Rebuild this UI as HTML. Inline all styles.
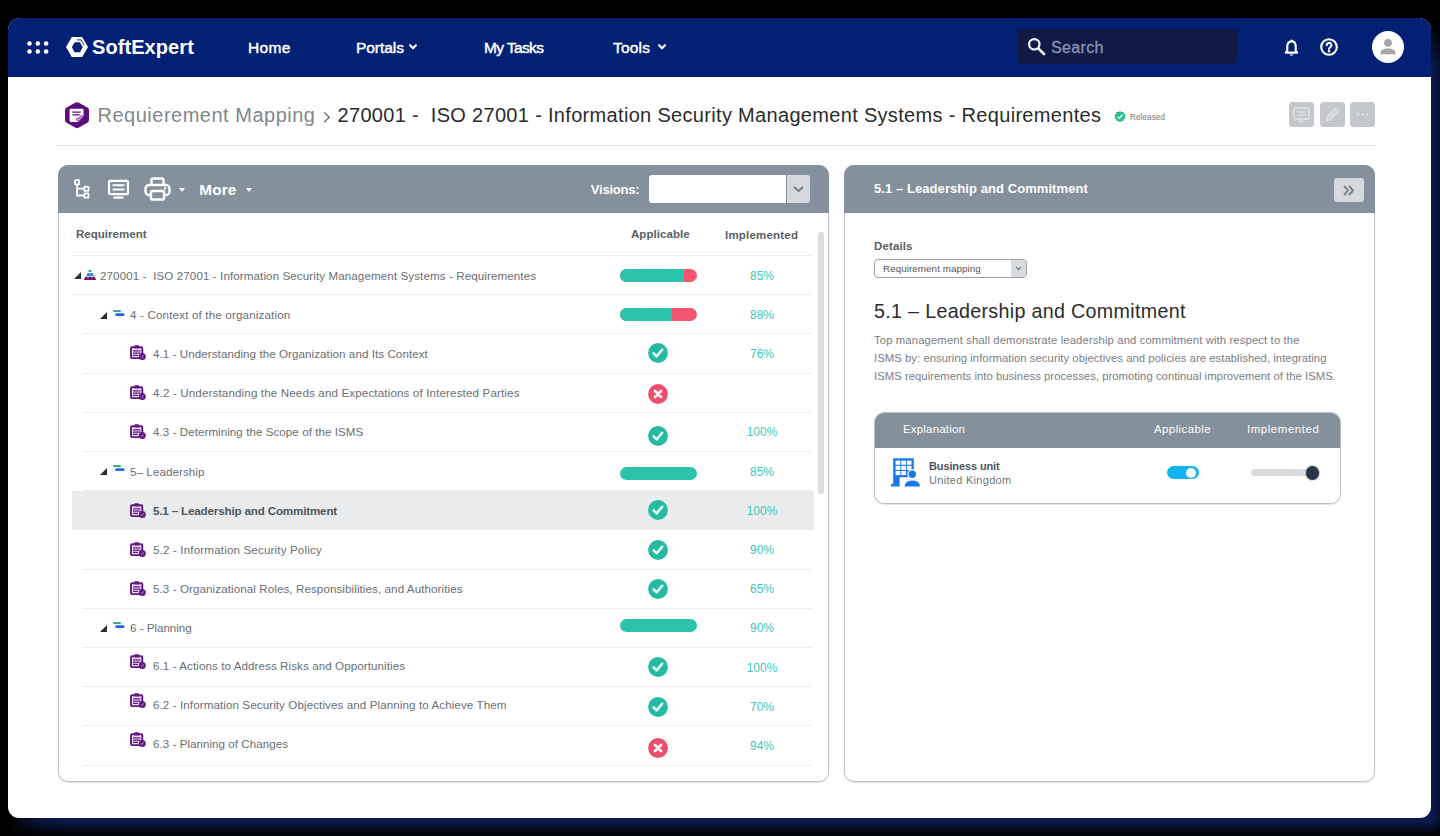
<!DOCTYPE html>
<html lang="en"><head><meta charset="utf-8"><title>Requierement Mapping</title>
<style>
*{box-sizing:border-box;margin:0;padding:0}
html,body{width:1440px;height:836px;overflow:hidden;background:#000}
body{font-family:"Liberation Sans",sans-serif;color:#555;position:relative}
#glow{position:absolute;left:0;top:0;width:1440px;height:836px;background:
 linear-gradient(to bottom,#000 0,#000 17px,rgba(0,0,0,.85) 30px,rgba(0,0,0,0) 64px),
 linear-gradient(to right,#000 0,#000 9px,rgba(0,0,0,.6) 22px,rgba(0,0,0,.2) 40px,rgba(0,0,0,0) 70px),
 linear-gradient(to bottom,rgba(0,0,0,0) 821px,rgba(0,0,0,.55) 828px,rgba(0,0,0,.95) 836px),
 linear-gradient(to right,rgba(0,0,0,0) 1431px,rgba(0,0,0,.4) 1440px),
 #0b1a4e}
#win{position:absolute;left:8px;top:18px;width:1423px;height:800px;background:#fff;border-radius:12px 12px 11px 11px;overflow:hidden}
#nav{position:absolute;left:0;top:0;width:100%;height:58.5px;background:#022175}
.abs{position:absolute;white-space:nowrap}
.nv{position:absolute;top:11px;height:36px;line-height:36px;color:#fff;font-size:15.5px;white-space:nowrap;-webkit-text-stroke:.45px #fff}
svg{position:absolute;overflow:visible}
/* everything below is in page coords via #pg */
#pg{position:absolute;left:0;top:0;width:1440px;height:836px}
.panel{position:absolute;top:165px;height:617px;border:1px solid #c0c3c6;border-radius:10px;background:#fff;box-shadow:0 1px 1px rgba(0,0,0,.12)}
.ph{position:absolute;left:-1px;top:-1px;right:-1px;height:47.8px;background:#84909c;border-radius:10px 10px 0 0}
.row{position:absolute;left:85px;width:727px;height:39.2px;font-size:11.6px;color:#6a6e74}
.row:after{content:"";position:absolute;left:-2px;right:0;bottom:-.5px;height:1px;background:#ededed}
.row.r0:after{left:-13px}
.row.sel:after{display:none}
.row.sel{left:72px;width:742px;background:#e9ebed;font-weight:bold;color:#50555b}
.row .t{position:absolute;top:0;line-height:40px;white-space:pre}
.row.sel .t,.row.sel svg,.row.sel .pct{margin-left:13px}
.bar{position:absolute;left:535.3px;width:77px;height:12.6px;border-radius:7px;background:#f5566f;overflow:hidden}
.bar b{display:block;height:100%;background:#2bc3ab}
.st{left:563px;width:20px;height:20px}
.pct{position:absolute;left:647px;width:60px;text-align:center;line-height:40.5px;color:#3fc8b2;font-size:12px;font-weight:normal}
.tri{position:absolute;top:16.4px;width:0;height:0;border-left:7.6px solid transparent;border-bottom:7px solid #2d2d2d}
.ico-root{left:-.7px;top:14.5px;width:12px;height:10px}
.ico-grp{left:28.4px;top:15.4px;width:12px;height:8px}
.ico-leaf{left:45px;width:16px;height:15px}
</style></head><body>
<div id="glow"></div>
<div id="win">
 <div id="nav"></div>
</div>
<div id="pg">
 <!-- NAV CONTENT -->
 <svg style="left:26.7px;top:40.5px" width="22" height="13" viewBox="0 0 22 13"><g fill="#fff"><circle cx="2.500" cy="2.500" r="2.300"/><circle cx="10.800" cy="2.500" r="2.300"/><circle cx="19.100" cy="2.500" r="2.300"/><circle cx="2.500" cy="10.500" r="2.300"/><circle cx="10.800" cy="10.500" r="2.300"/><circle cx="19.100" cy="10.500" r="2.300"/></g></svg>
 <svg style="left:66px;top:36.8px" width="22" height="20" viewBox="0 0 22 20"><path d="M5.800 0h10.400L22 10l-5.800 10H5.800L0 10z" fill="#fff"/><path d="M8.600 5.200H14l2.700 5-2.700 5H8.600l-2.700-5z" fill="#022175"/><path d="M10.800 2.900h4.300l3.100 5.300" fill="none" stroke="#022175" stroke-width=".9"/></svg>
 <div class="abs" id="logo" style="letter-spacing:0.075px;left:92px;top:35px;line-height:24px;font-size:20px;font-weight:bold;color:#fff">SoftExpert</div>
 <div class="nv" id="nv1" style="letter-spacing:0.314px;left:248px;top:30px">Home</div>
 <div class="nv" id="nv2" style="letter-spacing:-0.042px;left:356px;top:30px">Portals</div>
 <svg style="left:409.400px;top:43.800px" width="8" height="6" viewBox="0 0 8 6"><path d="M1.100 1.200L4 4.300l2.900-3.100" fill="none" stroke="#fff" stroke-width="2.100" stroke-linecap="round" stroke-linejoin="round"/></svg>
 <div class="nv" id="nv3" style="letter-spacing:-0.616px;left:484px;top:30px">My Tasks</div>
 <div class="nv" id="nv4" style="letter-spacing:0.203px;left:613px;top:30px">Tools</div>
 <svg style="left:657.500px;top:43.800px" width="8" height="6" viewBox="0 0 8 6"><path d="M1.100 1.200L4 4.300l2.900-3.100" fill="none" stroke="#fff" stroke-width="2.100" stroke-linecap="round" stroke-linejoin="round"/></svg>
 <div class="abs" style="left:1017.5px;top:28.5px;width:219.5px;height:35.5px;background:#111a45;border-radius:3px"></div>
 <svg style="left:1027px;top:37px" width="19" height="19" viewBox="0 0 19 19"><circle cx="7.300" cy="7.300" r="5.200" fill="none" stroke="#f1f2ff" stroke-width="2.200"/><path d="M11.300 11.300l5.700 5.700" stroke="#fff" stroke-width="2.600" stroke-linecap="round"/></svg>
 <div class="abs" id="search" style="letter-spacing:0.359px;left:1051px;top:29.700px;line-height:36px;font-size:16px;color:#8b94b6;-webkit-text-stroke:.3px #8b94b6">Search</div>
 <svg style="left:1284px;top:38.600px" width="15" height="18" viewBox="0 0 15 18"><path d="M7.500 2.400c-2.600 0-4.200 2-4.200 4.600v4.600l-1.500 2h11.400l-1.500-2V7c0-2.600-1.600-4.600-4.200-4.600z" fill="none" stroke="#fff" stroke-width="2.100" stroke-linejoin="round"/><path d="M5.700 15.400a1.900 1.900 0 0 0 3.600 0z" fill="#fff"/><path d="M6.300 2.200L7.500 0l1.200 2.200z" fill="#fff"/></svg>
 <svg style="left:1320px;top:38px" width="18" height="18" viewBox="0 0 18 18"><circle cx="9" cy="9" r="7.800" fill="none" stroke="#fff" stroke-width="2.100"/><path d="M6.700 7.300a2.350 2.350 0 1 1 3.500 2c-.8.500-1.200.9-1.200 1.700" fill="none" stroke="#fff" stroke-width="2" stroke-linecap="round"/><circle cx="9" cy="13.200" r="1.200" fill="#fff"/></svg>
 <svg style="left:1372px;top:31px" width="32" height="32" viewBox="0 0 32 32"><circle cx="16" cy="16" r="16" fill="#fff"/><circle cx="16" cy="11.800" r="3.900" fill="#a6a6a6"/><path d="M8.400 22.400c0-3.300 3.400-4.900 7.600-4.900s7.600 1.600 7.600 4.900v.8H8.400z" fill="#a6a6a6"/></svg>

 <!-- BREADCRUMB -->
 <svg style="left:64.900px;top:101.500px" width="24" height="26.300" viewBox="0 0 24 26.300"><path d="M12 3.300l8.900 5v9.700L12 23l-8.900-5V8.300z" fill="#5b0f7c" stroke="#5b0f7c" stroke-width="6.200" stroke-linejoin="round"/><path d="M5.900 6.800h11.300a1.300 1.300 0 0 1 1.300 1.300v6.300l-5 5.500H5.900a1.300 1.300 0 0 1-1.300-1.300V8.100a1.300 1.300 0 0 1 1.300-1.300z" fill="#fff"/><path d="M7.400 10.100h8.400M7.400 12.900h7.400" stroke="#5b0f7c" stroke-width="1.300"/><path d="M11.600 16.300l1.800 1.800 4.600-4.700" fill="none" stroke="#5b0f7c" stroke-width="2.600"/><path d="M11.600 16.300l1.800 1.800 4.600-4.700" fill="none" stroke="#f0b5f5" stroke-width="1.300"/></svg>
 <div class="abs" id="bc1" style="letter-spacing:0.505px;left:97.5px;top:100px;line-height:30px;font-size:20px;color:#82878c">Requierement Mapping</div>
 <svg style="left:322.500px;top:111px" width="8" height="13" viewBox="0 0 8 13"><path d="M1.200 1.200l5 5-5 5" fill="none" stroke="#777" stroke-width="1.500"/></svg>
 <div class="abs" id="bc2" style="letter-spacing:0.319px;left:337.5px;top:100px;line-height:30px;font-size:20px;color:#2b2b2b;white-space:pre">270001 -  ISO 27001 - Information Security Management Systems - Requirementes</div>
 <svg style="left:1114px;top:111px" width="12" height="12" viewBox="0 0 12 12"><path d="M6 0l1.500 1.100 1.900-.1.500 1.800 1.600 1-.7 1.700.7 1.700-1.600 1-.5 1.800-1.900-.1L6 11l-1.500-1.100-1.900.1-.5-1.800-1.600-1 .7-1.700-.7-1.700 1.600-1 .5-1.800 1.900.1z" fill="#27c08e"/><path d="M3.600 5.600l1.700 1.700 3-3.300" fill="none" stroke="#fff" stroke-width="1.300"/></svg>
 <div class="abs" id="rel" style="letter-spacing:0.058px;left:1130px;top:111.5px;line-height:12px;font-size:8.2px;color:#777">Released</div>
 <div class="abs" style="left:1289px;top:102px;width:25px;height:25px;border-radius:3.5px;background:#c4c8cc"></div>
 <div class="abs" style="left:1320px;top:102px;width:25px;height:25px;border-radius:3.5px;background:#c4c8cc"></div>
 <div class="abs" style="left:1350px;top:102px;width:25px;height:25px;border-radius:3.5px;background:#c4c8cc"></div>
 <svg style="left:1293px;top:106px" width="17" height="17" viewBox="0 0 17 17"><rect x="1" y="2" width="15" height="11" rx="1.500" fill="none" stroke="#dfe2e5" stroke-width="1.500"/><path d="M4 6h9M4 9h9M5.500 15.500h6" stroke="#dfe2e5" stroke-width="1.400"/></svg>
 <svg style="left:1324px;top:106px" width="17" height="17" viewBox="0 0 17 17"><path d="M2.500 14.500l1-4 8-8 3 3-8 8z" fill="none" stroke="#dfe2e5" stroke-width="1.500" stroke-linejoin="round"/><path d="M5 12l7-7" stroke="#dfe2e5" stroke-width="1.300"/></svg>
 <svg style="left:1354px;top:106px" width="17" height="17" viewBox="0 0 17 17"><g fill="#dfe2e5"><circle cx="4" cy="8.500" r="1.150"/><circle cx="8.500" cy="8.500" r="1.150"/><circle cx="13" cy="8.500" r="1.150"/></g></svg>
 <div class="abs" style="left:56px;top:144.5px;width:1319px;height:1px;background:#e3e5e8"></div>

 <!-- LEFT PANEL -->
 <div class="panel" style="left:58px;width:771px"><div class="ph"></div></div>
 <!-- RIGHT PANEL -->
 <div class="panel" style="left:844px;width:531px"><div class="ph"></div></div>

 <!-- left header content -->
 <svg style="left:74px;top:179px" width="16" height="20" viewBox="0 0 16 20"><g fill="none" stroke="#fff" stroke-width="1.800"><rect x="1" y="1.200" width="4.200" height="4.200" rx=".6"/><rect x="10.300" y="7.600" width="4.200" height="4.200" rx=".6"/><rect x="10.300" y="14.400" width="4.200" height="4.200" rx=".6"/><path d="M3.100 5.400v11.100h7.200M3.100 9.700h7.200"/></g></svg>
 <svg style="left:107px;top:179px" width="23" height="20" viewBox="0 0 23 20"><g fill="none" stroke="#fff" stroke-width="2.200"><rect x="2" y="1.800" width="19" height="13.400" rx="1.500"/><path d="M5.500 6.300h12M5.500 10.400h12" stroke-width="2"/><path d="M6.500 18.600h10" stroke-width="2.400"/></g></svg>
 <svg style="left:144px;top:177px" width="27" height="24" viewBox="0 0 27 24"><g fill="none" stroke="#fff" stroke-width="2.400" stroke-linejoin="round"><path d="M7.500 8V3a1.500 1.500 0 0 1 1.500-1.500h9A1.500 1.500 0 0 1 19.500 3V8"/><path d="M7 18H5a3.500 3.500 0 0 1-3.500-3.500v-3A3.500 3.500 0 0 1 5 8h17a3.500 3.500 0 0 1 3.500 3.500v3A3.500 3.500 0 0 1 22 18h-2"/><rect x="7" y="14" width="13" height="8.500" rx="1.500"/></g><circle cx="21" cy="11.500" r="1.200" fill="#fff"/></svg>
 <i class="abs" style="left:179px;top:188px;border-left:3.500px solid transparent;border-right:3.500px solid transparent;border-top:4px solid #fff"></i>
 <div class="abs" id="more" style="letter-spacing:0.151px;left:199.3px;top:178px;line-height:24px;font-size:15.3px;font-weight:bold;color:#fff">More</div>
 <i class="abs" style="left:246px;top:188px;border-left:3.500px solid transparent;border-right:3.500px solid transparent;border-top:4px solid #fff"></i>
 <div class="abs" id="vis" style="letter-spacing:-0.206px;left:590.8px;top:177.7px;line-height:24px;font-size:13px;font-weight:bold;color:#fff">Visions:</div>
 <div class="abs" style="left:649px;top:175px;width:137px;height:28px;background:#fff;border-radius:3px 0 0 3px"></div>
 <div class="abs" style="left:787px;top:175px;width:23px;height:28px;background:#d5d9dd;border-radius:0 3px 3px 0"></div>
 <svg style="left:793px;top:186px" width="11" height="7" viewBox="0 0 11 7"><path d="M1.500 1.500l4 3.500 4-3.500" fill="none" stroke="#7b848d" stroke-width="2.300" stroke-linecap="round" stroke-linejoin="round"/></svg>

 <!-- columns header -->
 <div class="abs" id="creq" style="letter-spacing:0.030px;left:76px;top:225px;line-height:18px;font-size:11.500px;font-weight:bold;color:#595e64">Requirement</div>
 <div class="abs" id="capp" style="letter-spacing:0.060px;left:631px;top:225px;line-height:18px;font-size:11.500px;font-weight:bold;color:#595e64">Applicable</div>
 <div class="abs" id="cimp" style="letter-spacing:0.206px;left:725px;top:226px;line-height:18px;font-size:11.500px;font-weight:bold;color:#595e64">Implemented</div>
 <div class="abs" style="left:72px;top:255px;width:740px;height:1px;background:#ececec"></div>
 <div class="abs" style="left:818px;top:232px;width:6px;height:262px;background:#dcdcdc;border-radius:2px"></div>
<div class="row r0" style="top:255.5px"><i class="tri" style="left:-11px"></i><svg class="ico-root" viewBox="0 0 12 10"><rect x="4.400" y="0" width="3.200" height="2" rx=".8" fill="#3aa982"/><path d="M2.200 6l1.500-3h4.600l1.500 3z" fill="#2b7be0"/><path d="M6 3.200v2.800" stroke="#fff" stroke-width=".5"/><path d="M0 10l1.400-3.300h9.200L12 10z" fill="#4a1470"/><path d="M4 6.700v3.300M8 6.700v3.300" stroke="#fff" stroke-width=".5"/><path d="M0 10l.5-1.200h11L12 10z" fill="#8a1254"/></svg><span class="t" id="r0" style="letter-spacing:0.098px;left:15px">270001 -  ISO 27001 - Information Security Management Systems - Requirementes</span><span class="bar" style="top:13.9px"><b style="width:83%"></b></span><span class="pct">85%</span></div>
<div class="row" style="top:294.7px"><i class="tri" style="left:15.4px;top:17.6px"></i><svg class="ico-grp" style="top:15.0px" viewBox="0 0 12 8"><rect x="0" y="0" width="8" height="2.100" rx="1" fill="#3aa982"/><rect x="2.200" y="3.200" width="9.400" height="2.800" rx="1.300" fill="#1f6fd6"/></svg><span class="t" id="r1" style="letter-spacing:0.166px;left:45px">4 - Context of the organization</span><span class="bar" style="top:13.6px"><b style="width:67%"></b></span><span class="pct">88%</span></div>
<div class="row" style="top:333.9px"><svg class="ico-leaf" style="top:11.3px" viewBox="0 0 16 15"><rect x="1" y="2.300" width="11.300" height="10.800" rx="1" fill="#ecdcf3" stroke="#611a80" stroke-width="1.900"/><rect x="4.200" y=".2" width="5" height="3.200" rx="1" fill="#611a80"/><path d="M3 5.800h7.400M3 8.100h7.400M3 10.400h5" stroke="#611a80" stroke-width="1.200"/><circle cx="12.300" cy="11.400" r="3.500" fill="#611a80"/><path d="M10.900 11.500l1 1 1.800-2.100" fill="none" stroke="#c79adb" stroke-width="1"/></svg><span class="t" id="r2" style="letter-spacing:0.068px;left:68px;top:0px">4.1 - Understanding the Organization and Its Context</span><svg class="st" style="top:8.9px" viewBox="0 0 20 20"><circle cx="10" cy="10" r="9.900" fill="#27baa2"/><path d="M5.600 10.300l3 3.100 5.600-6.700" fill="none" stroke="#eafffa" stroke-width="2.500" stroke-linecap="round" stroke-linejoin="round"/></svg><span class="pct">76%</span></div>
<div class="row" style="top:373.1px"><svg class="ico-leaf" style="top:12.4px" viewBox="0 0 16 15"><rect x="1" y="2.300" width="11.300" height="10.800" rx="1" fill="#ecdcf3" stroke="#611a80" stroke-width="1.900"/><rect x="4.200" y=".2" width="5" height="3.200" rx="1" fill="#611a80"/><path d="M3 5.800h7.400M3 8.100h7.400M3 10.400h5" stroke="#611a80" stroke-width="1.200"/><circle cx="12.300" cy="11.400" r="3.500" fill="#611a80"/><path d="M10.900 11.500l1 1 1.800-2.100" fill="none" stroke="#c79adb" stroke-width="1"/></svg><span class="t" id="r3" style="letter-spacing:0.140px;left:68px;top:0px">4.2 - Understanding the Needs and Expectations of Interested Parties</span><svg class="st" style="top:10.8px" viewBox="0 0 20 20"><circle cx="10" cy="10" r="9.900" fill="#ef4d6c"/><path d="M7 7l6 6M13 7l-6 6" fill="none" stroke="#fff" stroke-width="2.700" stroke-linecap="round"/></svg></div>
<div class="row" style="top:412.3px"><svg class="ico-leaf" style="top:11.9px" viewBox="0 0 16 15"><rect x="1" y="2.300" width="11.300" height="10.800" rx="1" fill="#ecdcf3" stroke="#611a80" stroke-width="1.900"/><rect x="4.200" y=".2" width="5" height="3.200" rx="1" fill="#611a80"/><path d="M3 5.800h7.400M3 8.100h7.400M3 10.400h5" stroke="#611a80" stroke-width="1.200"/><circle cx="12.300" cy="11.400" r="3.500" fill="#611a80"/><path d="M10.900 11.500l1 1 1.800-2.100" fill="none" stroke="#c79adb" stroke-width="1"/></svg><span class="t" id="r4" style="letter-spacing:0.056px;left:68px;top:0px">4.3 - Determining the Scope of the ISMS</span><svg class="st" style="top:13.5px" viewBox="0 0 20 20"><circle cx="10" cy="10" r="9.900" fill="#27baa2"/><path d="M5.600 10.300l3 3.100 5.600-6.700" fill="none" stroke="#eafffa" stroke-width="2.500" stroke-linecap="round" stroke-linejoin="round"/></svg><span class="pct">100%</span></div>
<div class="row" style="top:451.5px"><i class="tri" style="left:15.4px;top:16.6px"></i><svg class="ico-grp" style="top:13.9px" viewBox="0 0 12 8"><rect x="0" y="0" width="8" height="2.100" rx="1" fill="#3aa982"/><rect x="2.200" y="3.200" width="9.400" height="2.800" rx="1.300" fill="#1f6fd6"/></svg><span class="t" id="r5" style="letter-spacing:0.083px;left:45px">5– Leadership</span><span class="bar" style="top:15.9px"><b style="width:100%"></b></span><span class="pct">85%</span></div>
<div class="row sel" style="top:490.7px"><svg class="ico-leaf" style="top:12.6px" viewBox="0 0 16 15"><rect x="1" y="2.300" width="11.300" height="10.800" rx="1" fill="#ecdcf3" stroke="#611a80" stroke-width="1.900"/><rect x="4.200" y=".2" width="5" height="3.200" rx="1" fill="#611a80"/><path d="M3 5.800h7.400M3 8.100h7.400M3 10.400h5" stroke="#611a80" stroke-width="1.200"/><circle cx="12.300" cy="11.400" r="3.500" fill="#611a80"/><path d="M10.900 11.500l1 1 1.800-2.100" fill="none" stroke="#c79adb" stroke-width="1"/></svg><span class="t" id="r6" style="letter-spacing:-0.153px;left:68px;top:0px">5.1 – Leadership and Commitment</span><svg class="st" style="top:9.8px" viewBox="0 0 20 20"><circle cx="10" cy="10" r="9.900" fill="#27baa2"/><path d="M5.600 10.300l3 3.100 5.600-6.700" fill="none" stroke="#eafffa" stroke-width="2.500" stroke-linecap="round" stroke-linejoin="round"/></svg><span class="pct">100%</span></div>
<div class="row" style="top:529.9px"><svg class="ico-leaf" style="top:12.3px" viewBox="0 0 16 15"><rect x="1" y="2.300" width="11.300" height="10.800" rx="1" fill="#ecdcf3" stroke="#611a80" stroke-width="1.900"/><rect x="4.200" y=".2" width="5" height="3.200" rx="1" fill="#611a80"/><path d="M3 5.800h7.400M3 8.100h7.400M3 10.400h5" stroke="#611a80" stroke-width="1.200"/><circle cx="12.300" cy="11.400" r="3.500" fill="#611a80"/><path d="M10.900 11.500l1 1 1.800-2.100" fill="none" stroke="#c79adb" stroke-width="1"/></svg><span class="t" id="r7" style="letter-spacing:0.157px;left:68px;top:0px">5.2 - Information Security Policy</span><svg class="st" style="top:9.8px" viewBox="0 0 20 20"><circle cx="10" cy="10" r="9.900" fill="#27baa2"/><path d="M5.600 10.300l3 3.100 5.600-6.700" fill="none" stroke="#eafffa" stroke-width="2.500" stroke-linecap="round" stroke-linejoin="round"/></svg><span class="pct">90%</span></div>
<div class="row" style="top:569.1px"><svg class="ico-leaf" style="top:12.1px" viewBox="0 0 16 15"><rect x="1" y="2.300" width="11.300" height="10.800" rx="1" fill="#ecdcf3" stroke="#611a80" stroke-width="1.900"/><rect x="4.200" y=".2" width="5" height="3.200" rx="1" fill="#611a80"/><path d="M3 5.800h7.400M3 8.100h7.400M3 10.400h5" stroke="#611a80" stroke-width="1.200"/><circle cx="12.300" cy="11.400" r="3.500" fill="#611a80"/><path d="M10.900 11.500l1 1 1.800-2.100" fill="none" stroke="#c79adb" stroke-width="1"/></svg><span class="t" id="r8" style="letter-spacing:0.089px;left:68px;top:0px">5.3 - Organizational Roles, Responsibilities, and Authorities</span><svg class="st" style="top:9.5px" viewBox="0 0 20 20"><circle cx="10" cy="10" r="9.900" fill="#27baa2"/><path d="M5.600 10.300l3 3.100 5.600-6.700" fill="none" stroke="#eafffa" stroke-width="2.500" stroke-linecap="round" stroke-linejoin="round"/></svg><span class="pct">65%</span></div>
<div class="row" style="top:608.3px"><i class="tri" style="left:15.4px;top:16.6px"></i><svg class="ico-grp" style="top:13.9px" viewBox="0 0 12 8"><rect x="0" y="0" width="8" height="2.100" rx="1" fill="#3aa982"/><rect x="2.200" y="3.200" width="9.400" height="2.800" rx="1.300" fill="#1f6fd6"/></svg><span class="t" id="r9" style="letter-spacing:-0.016px;left:45px">6 - Planning</span><span class="bar" style="top:11.1px"><b style="width:100%"></b></span><span class="pct">90%</span></div>
<div class="row" style="top:647.5px"><svg class="ico-leaf" style="top:6.8px" viewBox="0 0 16 15"><rect x="1" y="2.300" width="11.300" height="10.800" rx="1" fill="#ecdcf3" stroke="#611a80" stroke-width="1.900"/><rect x="4.200" y=".2" width="5" height="3.200" rx="1" fill="#611a80"/><path d="M3 5.800h7.400M3 8.100h7.400M3 10.400h5" stroke="#611a80" stroke-width="1.200"/><circle cx="12.300" cy="11.400" r="3.500" fill="#611a80"/><path d="M10.900 11.500l1 1 1.800-2.100" fill="none" stroke="#c79adb" stroke-width="1"/></svg><span class="t" id="r10" style="letter-spacing:0.083px;left:68px;top:-1.7px">6.1 - Actions to Address Risks and Opportunities</span><svg class="st" style="top:9.9px" viewBox="0 0 20 20"><circle cx="10" cy="10" r="9.900" fill="#27baa2"/><path d="M5.600 10.300l3 3.100 5.600-6.700" fill="none" stroke="#eafffa" stroke-width="2.500" stroke-linecap="round" stroke-linejoin="round"/></svg><span class="pct">100%</span></div>
<div class="row" style="top:686.7px"><svg class="ico-leaf" style="top:6.5px" viewBox="0 0 16 15"><rect x="1" y="2.300" width="11.300" height="10.800" rx="1" fill="#ecdcf3" stroke="#611a80" stroke-width="1.900"/><rect x="4.200" y=".2" width="5" height="3.200" rx="1" fill="#611a80"/><path d="M3 5.800h7.400M3 8.100h7.400M3 10.400h5" stroke="#611a80" stroke-width="1.200"/><circle cx="12.300" cy="11.400" r="3.500" fill="#611a80"/><path d="M10.900 11.500l1 1 1.800-2.100" fill="none" stroke="#c79adb" stroke-width="1"/></svg><span class="t" id="r11" style="letter-spacing:0.096px;left:68px;top:-1.7px">6.2 - Information Security Objectives and Planning to Achieve Them</span><svg class="st" style="top:10.0px" viewBox="0 0 20 20"><circle cx="10" cy="10" r="9.900" fill="#27baa2"/><path d="M5.600 10.300l3 3.100 5.600-6.700" fill="none" stroke="#eafffa" stroke-width="2.500" stroke-linecap="round" stroke-linejoin="round"/></svg><span class="pct">70%</span></div>
<div class="row" style="top:725.9px"><svg class="ico-leaf" style="top:6.2px" viewBox="0 0 16 15"><rect x="1" y="2.300" width="11.300" height="10.800" rx="1" fill="#ecdcf3" stroke="#611a80" stroke-width="1.900"/><rect x="4.200" y=".2" width="5" height="3.200" rx="1" fill="#611a80"/><path d="M3 5.800h7.400M3 8.100h7.400M3 10.400h5" stroke="#611a80" stroke-width="1.200"/><circle cx="12.300" cy="11.400" r="3.500" fill="#611a80"/><path d="M10.900 11.500l1 1 1.800-2.100" fill="none" stroke="#c79adb" stroke-width="1"/></svg><span class="t" id="r12" style="letter-spacing:0.038px;left:68px;top:-1.7px">6.3 - Planning of Changes</span><svg class="st" style="top:12.3px" viewBox="0 0 20 20"><circle cx="10" cy="10" r="9.900" fill="#ef4d6c"/><path d="M7 7l6 6M13 7l-6 6" fill="none" stroke="#fff" stroke-width="2.700" stroke-linecap="round"/></svg><span class="pct">94%</span></div>

 <!-- right header content -->
 <div class="abs" id="rtitle" style="letter-spacing:0.071px;left:874px;top:177px;line-height:24px;font-size:13px;font-weight:bold;color:#fff">5.1 – Leadership and Commitment</div>
 <div class="abs" style="left:1333.5px;top:178px;width:30px;height:23.5px;border-radius:3px;background:#d5d9dd"></div>
 <svg style="left:1342.5px;top:184.5px" width="12" height="11" viewBox="0 0 12 11"><path d="M1.500 1.500l3.500 4-3.500 4M6.500 1.500l3.500 4-3.500 4" fill="none" stroke="#7b848d" stroke-width="2" stroke-linecap="round" stroke-linejoin="round"/></svg>
 <div class="abs" id="det" style="letter-spacing:0.130px;left:874px;top:237px;line-height:18px;font-size:11.500px;font-weight:bold;color:#595e64">Details</div>
 <div class="abs" style="left:874px;top:259px;width:153px;height:19px;border:1px solid #9b9fa4;border-radius:4px;background:#fff"></div>
 <div class="abs" style="left:1011px;top:260px;width:15px;height:17px;border-radius:0 3px 3px 0;background:#d9dcdf"></div>
 <svg style="left:1015px;top:266px" width="7" height="5" viewBox="0 0 7 5"><path d="M1 1l2.500 2.500L6 1" fill="none" stroke="#7b848d" stroke-width="1.400"/></svg>
 <div class="abs" id="selv" style="letter-spacing:0.078px;left:883px;top:260px;line-height:17px;font-size:9.8px;color:#555">Requirement mapping</div>
 <div class="abs" id="h1" style="letter-spacing:0.315px;left:874px;top:295px;line-height:32px;font-size:19.7px;color:#2b2b2b">5.1 – Leadership and Commitment</div>
 <div class="abs para" id="p1" style="letter-spacing:0.119px;left:874px;top:330.5px;line-height:18px;font-size:11.3px;color:#797e84">Top management shall demonstrate leadership and commitment with respect to the</div>
 <div class="abs para" id="p2" style="letter-spacing:0.046px;left:874px;top:348.5px;line-height:18px;font-size:11.3px;color:#797e84">ISMS by: ensuring information security objectives and policies are established, integrating</div>
 <div class="abs para" id="p3" style="letter-spacing:0.035px;left:874px;top:367.2px;line-height:18px;font-size:11.3px;color:#797e84">ISMS requirements into business processes, promoting continual improvement of the ISMS.</div>

 <div class="abs" style="left:874px;top:412px;width:467px;height:91.5px;border:1px solid #bcbfc3;border-radius:10px;background:#fff;overflow:hidden;box-shadow:0 1px 1px rgba(0,0,0,.1)"><div style="position:absolute;left:-1px;top:-1px;right:-1px;height:36px;background:#84909c"></div></div>
 <div class="abs" id="expl" style="letter-spacing:0.179px;left:903px;top:420px;line-height:18px;font-size:11.500px;color:#fff">Explanation</div>
 <div class="abs" id="tapp" style="letter-spacing:0.391px;left:1154px;top:420px;line-height:18px;font-size:11.500px;color:#fff">Applicable</div>
 <div class="abs" id="timp" style="letter-spacing:0.532px;left:1247px;top:420px;line-height:18px;font-size:11.500px;color:#fff">Implemented</div>
 <svg style="left:890px;top:457.3px" width="31" height="31" viewBox="0 0 31 31"><path d="M3.200 1.200h20.600v19H9.600v9.300H1v-2.700h2.200z" fill="#1a78ee"/><g fill="#fff"><rect x="5.600" y="3.600" width="4.700" height="4.100"/><rect x="11.200" y="3.600" width="4.700" height="4.100"/><rect x="16.800" y="3.600" width="4.700" height="4.100"/><rect x="5.600" y="8.800" width="4.700" height="4.100"/><rect x="11.200" y="8.800" width="4.700" height="4.100"/><rect x="16.800" y="8.800" width="4.700" height="4.100"/><rect x="5.600" y="14" width="4.700" height="4.100"/><rect x="11.200" y="14" width="4.700" height="4.100"/></g><circle cx="22.300" cy="17.200" r="5" fill="#fff"/><circle cx="22.300" cy="17.200" r="3.700" fill="#1a78ee"/><path d="M13.800 30.200c0-5 3.500-7.400 8.500-7.400s8.500 2.400 8.500 7.400z" fill="#1a78ee" stroke="#fff" stroke-width="1.200"/></svg>
 <div class="abs" id="bu" style="letter-spacing:-0.119px;left:929px;top:459px;line-height:14px;font-size:11px;font-weight:bold;color:#4f555b">Business unit</div>
 <div class="abs" id="uk" style="letter-spacing:0.301px;left:929px;top:473px;line-height:14px;font-size:11px;color:#70757b">United Kingdom</div>
 <div class="abs" style="left:1167px;top:466px;width:32px;height:13px;border-radius:7px;background:#12b4f2"></div>
 <div class="abs" style="left:1186px;top:467.500px;width:10px;height:10px;border-radius:5px;background:#fff"></div>
 <div class="abs" style="left:1251px;top:469px;width:60px;height:7px;border-radius:4px;background:#d9dcdf"></div>
 <div class="abs" style="left:1305.5px;top:466px;width:13.5px;height:13.5px;border-radius:7px;background:#2b3548;box-shadow:0 0 0 1px rgba(120,130,150,.35)"></div>
</div>
</body></html>
